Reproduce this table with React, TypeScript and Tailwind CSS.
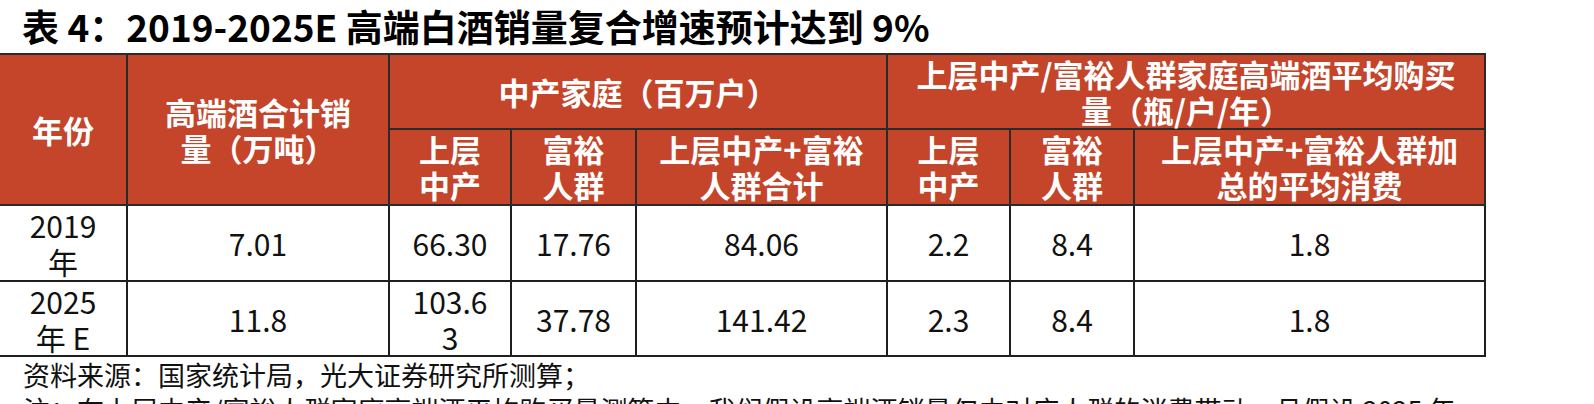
const HEAD = "bg-[#c4452a] text-white font-bold text-[31px] leading-[36px] text-center align-middle border-2 border-[#2a2a2a]";
const CELL = "bg-white text-[#111] text-[30px] leading-[36px] text-center align-middle border-2 border-[#1f1f1f]";

const rows = [
  { year: ["2019", "年"], total: ["7.01"], upper: ["66.30"], rich: ["17.76"], sum: ["84.06"], a: "2.2", b: "8.4", c: "1.8" },
  { year: ["2025", "年 E"], total: ["11.8"], upper: ["103.6", "3"], rich: ["37.78"], sum: ["141.42"], a: "2.3", b: "8.4", c: "1.8" },
];

const Lines = ({ items }: { items: string[] }) => (
  <>
    {items.map((t, i) => (
      <div key={i}>{t}</div>
    ))}
  </>
);

export default function App() {
  return (
    <div
      className="w-[1594px] h-[404px] overflow-hidden bg-white"
      style={{ fontFamily: '"Noto Sans CJK SC", "Noto Sans", sans-serif' }}
    >
      <div className="h-[53px] flex items-center pl-[22px] text-[37px] font-bold text-black">
        表 4：2019-2025E 高端白酒销量复合增速预计达到 9%
      </div>

      <table className="table-fixed border-collapse w-[1485px]">
        <colgroup>
          <col className="w-[127px]" />
          <col className="w-[262px]" />
          <col className="w-[122px]" />
          <col className="w-[125px]" />
          <col className="w-[251px]" />
          <col className="w-[123px]" />
          <col className="w-[124px]" />
          <col className="w-[351px]" />
        </colgroup>
        <thead>
          <tr className="h-[75px]">
            <th rowSpan={2} className={`${HEAD} border-l-0`}>
              年份
            </th>
            <th rowSpan={2} className={HEAD}>
              <Lines items={["高端酒合计销", "量（万吨）"]} />
            </th>
            <th colSpan={3} className={HEAD}>
              中产家庭（百万户）
            </th>
            <th colSpan={3} className={HEAD}>
              <Lines items={["上层中产/富裕人群家庭高端酒平均购买", "量（瓶/户/年）"]} />
            </th>
          </tr>
          <tr className="h-[76px]">
            <th className={HEAD}>
              <Lines items={["上层", "中产"]} />
            </th>
            <th className={HEAD}>
              <Lines items={["富裕", "人群"]} />
            </th>
            <th className={HEAD}>
              <Lines items={["上层中产+富裕", "人群合计"]} />
            </th>
            <th className={HEAD}>
              <Lines items={["上层", "中产"]} />
            </th>
            <th className={HEAD}>
              <Lines items={["富裕", "人群"]} />
            </th>
            <th className={HEAD}>
              <Lines items={["上层中产+富裕人群加", "总的平均消费"]} />
            </th>
          </tr>
        </thead>
        <tbody>
          {rows.map((r, i) => (
            <tr key={i} className={i === 0 ? "h-[76px]" : "h-[75px]"}>
              <td className={`${CELL} border-l-0`}>
                <Lines items={r.year} />
              </td>
              <td className={CELL}>
                <Lines items={r.total} />
              </td>
              <td className={CELL}>
                <Lines items={r.upper} />
              </td>
              <td className={CELL}>
                <Lines items={r.rich} />
              </td>
              <td className={CELL}>
                <Lines items={r.sum} />
              </td>
              <td className={CELL}>{r.a}</td>
              <td className={CELL}>{r.b}</td>
              <td className={CELL}>{r.c}</td>
            </tr>
          ))}
        </tbody>
      </table>

      <div className="pl-[23px] text-[27px] leading-[35px] text-[#111] whitespace-nowrap">
        <div>资料来源：国家统计局，光大证券研究所测算；</div>
        <div>注：在上层中产/富裕人群家庭高端酒平均购买量测算中，我们假设高端酒销量仅由对应人群的消费带动，且假设 2025 年</div>
      </div>
    </div>
  );
}
